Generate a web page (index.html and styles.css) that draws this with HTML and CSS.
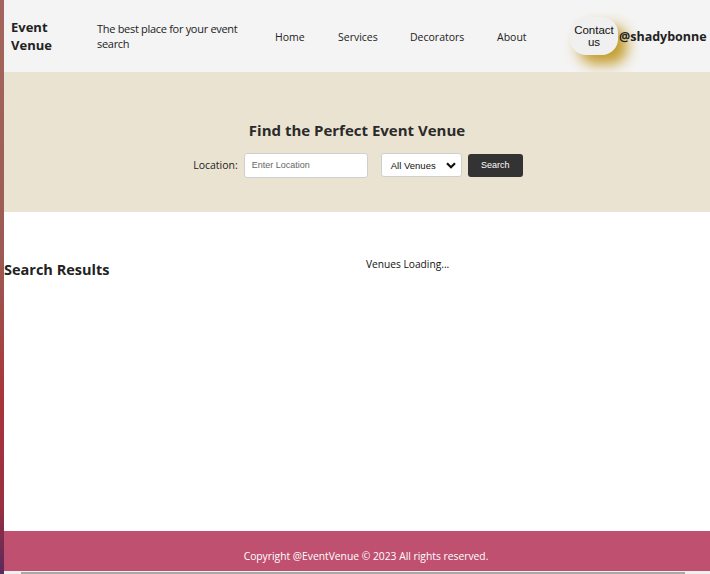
FILE: index.html
```html
<!DOCTYPE html>
<html>
<head>
<meta charset="utf-8">
<link rel="stylesheet" href="styles.css">
</head>
<body>
<div class="page">
  <header class="topbar">
    <div class="logo">Event<br>Venue</div>
    <div class="tagline">The best place for your event search</div>
    <nav class="nav">
      <a class="nav-home" href="#">Home</a>
      <a class="nav-services" href="#">Services</a>
      <a class="nav-decor" href="#">Decorators</a>
      <a class="nav-about" href="#">About</a>
    </nav>
    <button class="contact">Contact us</button>
    <div class="user">@shadybonne</div>
  </header>
  <section class="hero">
    <h1 class="hero-title">Find the Perfect Event Venue</h1>
    <form class="search-row">
      <label class="loc-label">Location:</label>
      <input class="loc-input" type="text" placeholder="Enter Location">
      <div class="select">
        <span>All Venues</span>
        <svg class="chev" width="10" height="7" viewBox="0 0 10 7"><path d="M1 1.2 L5 5.2 L9 1.2" fill="none" stroke="#111" stroke-width="2.2"/></svg>
      </div>
      <button class="search-btn" type="button">Search</button>
    </form>
  </section>
  <main class="results">
    <h2 class="results-title">Search Results</h2>
    <div class="loading">Venues Loading...</div>
  </main>
  <footer class="footer">Copyright @EventVenue © 2023 All rights reserved.</footer>
  <div class="hscroll"><div class="thumb"></div></div>
</div>
</body>
</html>
```
FILE: styles.css
```css
html, body {
  margin: 0;
  height: 100%;
}
body {
  background: linear-gradient(180deg, #a4665c 0%, #9c5a52 45%, #a8343c 70%, #9a3040 88%, #5a2a5a 100%);
  display: flex;
  overflow: hidden;
  font-family: "Open Sans", "Noto Sans", sans-serif;
}
.page {
  margin-left: 4px;
  width: 706px;
  height: 574px;
  flex: none;
  background: #fff;
  display: flex;
  flex-direction: column;
  overflow: hidden;
}
.topbar {
  height: 72px;
  flex: none;
  background: #f4f4f4;
  display: flex;
  align-items: center;
  white-space: nowrap;
}
.topbar > * {
  flex: none;
}
.logo {
  margin-left: 7px;
  width: 86px;
  font-weight: 700;
  font-size: 13px;
  line-height: 18px;
  color: #222;
}
.tagline {
  width: 148px;
  white-space: normal;
  font-size: 11px;
  line-height: 15px;
  letter-spacing: -0.3px;
  color: #222;
}
.nav {
  display: flex;
  margin-left: 30px;
  padding-top: 2px;
}
.nav a {
  font-size: 10.5px;
  color: #222;
  text-decoration: none;
}
.nav-home { width: 63px; }
.nav-services { width: 72px; }
.nav-decor { width: 87px; }
.nav-about { width: 73px; }
.contact {
  width: 48px;
  height: 38px;
  border: none;
  border-radius: 16px;
  background: #f0f0f0;
  font-family: "Liberation Sans", Arial, sans-serif;
  font-size: 11.5px;
  line-height: 12px;
  color: #111;
  padding: 0 2px;
  white-space: normal;
  box-shadow: 9px 9px 14px rgba(190, 145, 20, 0.9);
}
.user {
  margin-left: 1px;
  font-weight: 700;
  font-size: 12.5px;
  color: #222;
}
.hero {
  height: 140px;
  flex: none;
  background: #ebe3d1;
  display: flex;
  flex-direction: column;
  align-items: center;
}
.hero-title {
  margin: 48px 0 0 0;
  font-size: 15px;
  line-height: 20px;
  font-weight: 700;
  color: #2a2a2a;
}
.search-row {
  margin: 12px 0 0 2px;
  display: flex;
  align-items: center;
  height: 26px;
}
.loc-label {
  font-size: 10.5px;
  color: #222;
  margin-right: 6px;
}
.loc-input {
  box-sizing: border-box;
  width: 124px;
  height: 25px;
  border: 1px solid #cfcfcf;
  border-radius: 3px;
  background: #fff;
  padding: 0 7px;
  font-family: "Liberation Sans", Arial, sans-serif;
  font-size: 9px;
  color: #333;
}
.loc-input::placeholder {
  color: #666;
}
.select {
  box-sizing: border-box;
  margin-left: 13px;
  width: 81px;
  height: 24px;
  border: 1px solid #cfcfcf;
  border-radius: 3px;
  background: #fff;
  display: flex;
  align-items: center;
  justify-content: space-between;
  padding: 0 5px 0 9px;
  font-family: "Liberation Sans", Arial, sans-serif;
  font-size: 9.5px;
  color: #111;
}
.chev {
  display: block;
}
.search-btn {
  margin-left: 6px;
  width: 55px;
  height: 23px;
  border: none;
  border-radius: 3px;
  background: #333;
  color: #fff;
  font-family: "Liberation Sans", Arial, sans-serif;
  font-size: 9px;
  padding: 0;
}
.results {
  flex: 1;
  display: flex;
  align-items: flex-start;
}
.results-title {
  margin: 48px 0 0 0;
  font-size: 14.5px;
  line-height: 20px;
  font-weight: 700;
  color: #222;
  width: 362px;
}
.loading {
  margin-top: 45px;
  font-size: 10.2px;
  line-height: 14px;
  color: #111;
}
.footer {
  height: 40px;
  flex: none;
  background: #c05070;
  color: #fff;
  font-size: 10.3px;
  display: flex;
  align-items: center;
  justify-content: center;
  padding: 10px 0 0 18px;
  box-sizing: border-box;
}
.hscroll {
  height: 3px;
  flex: none;
  background: #f0f0f0;
  display: flex;
  align-items: flex-end;
}
.thumb {
  margin-left: 17px;
  width: 664px;
  height: 2px;
  background: #a8a8a8;
}
```
